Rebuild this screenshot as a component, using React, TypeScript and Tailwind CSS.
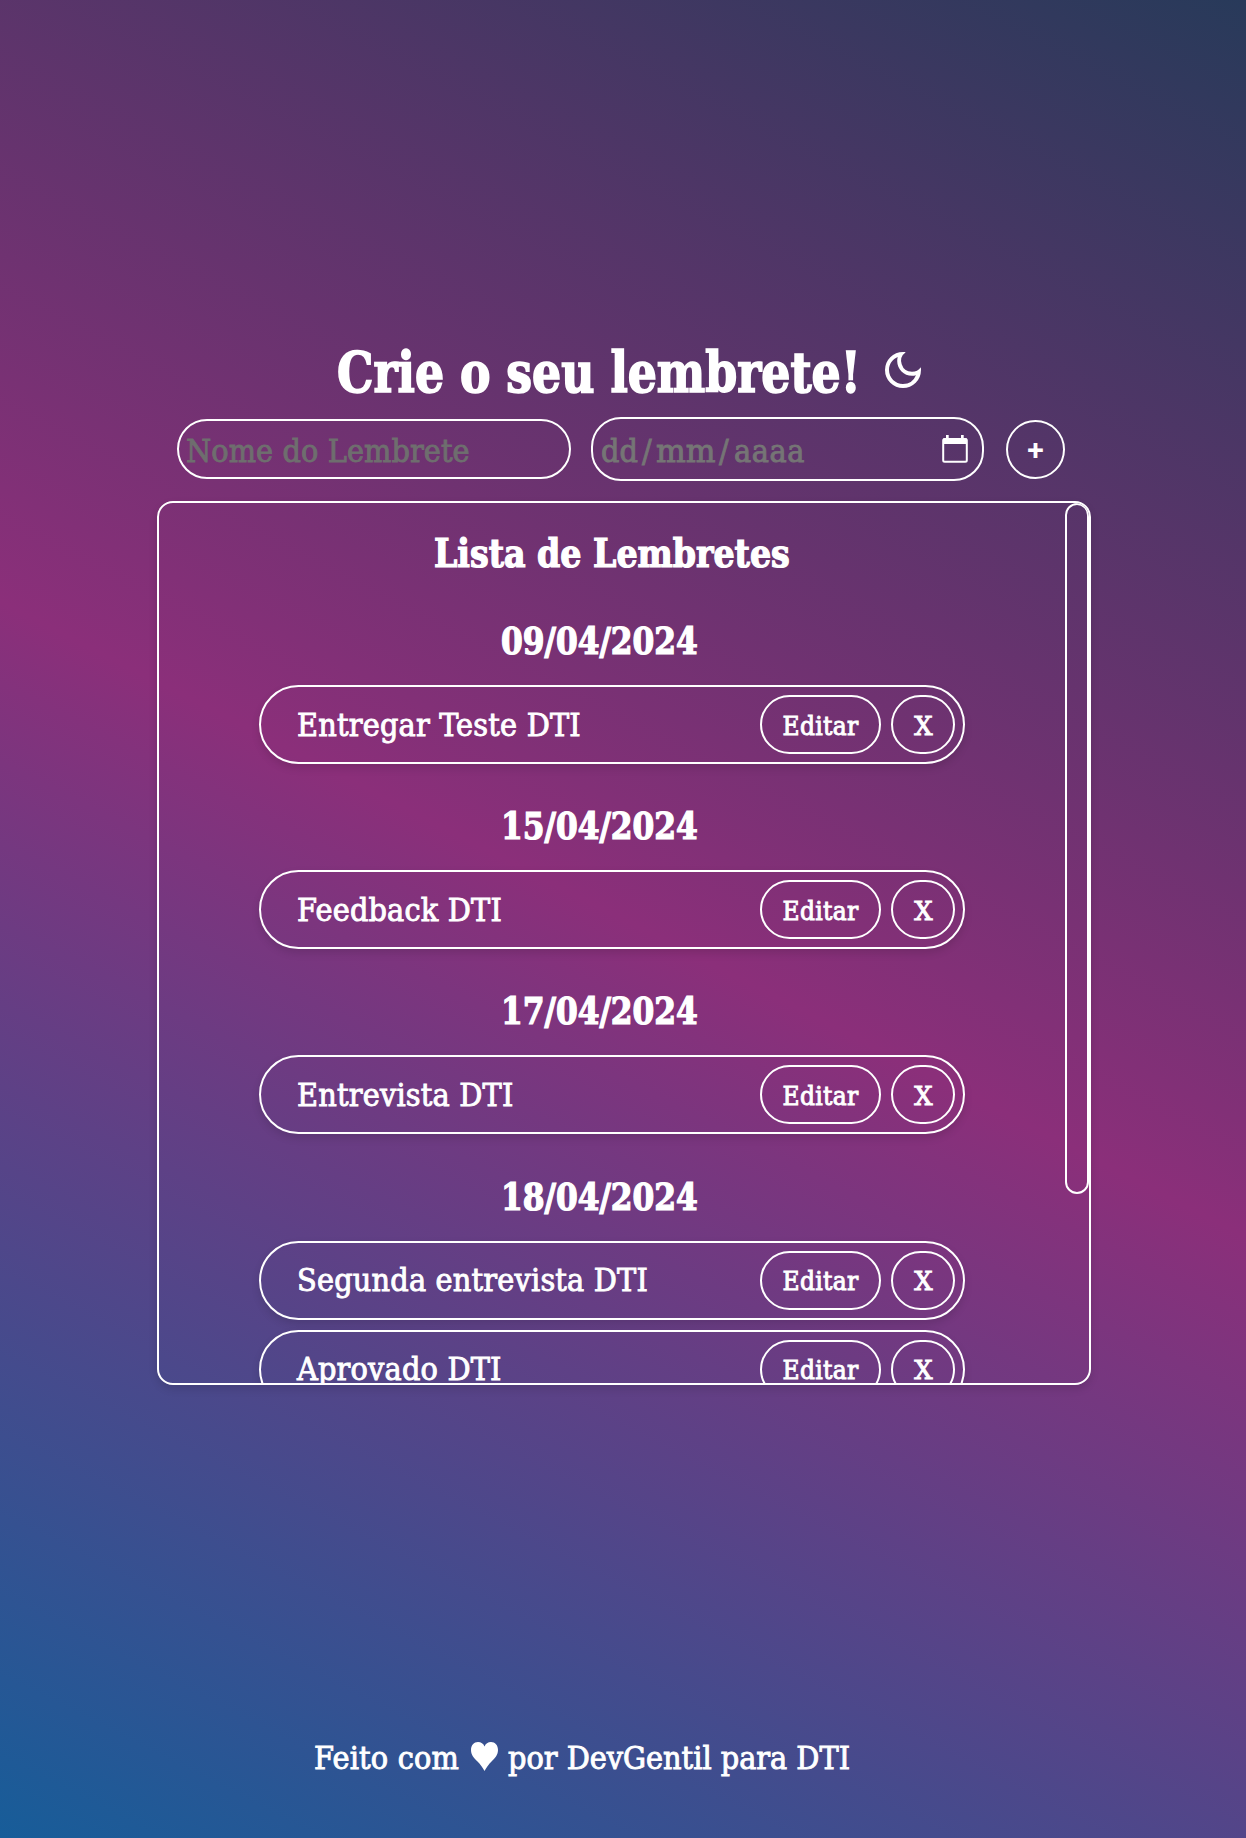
import { MdOutlineDarkMode } from "react-icons/md";

type Group = { date: string; items: string[] };

const groups: Group[] = [
  { date: "09/04/2024", items: ["Entregar Teste DTI"] },
  { date: "15/04/2024", items: ["Feedback DTI"] },
  { date: "17/04/2024", items: ["Entrevista DTI"] },
  { date: "18/04/2024", items: ["Segunda entrevista DTI", "Aprovado DTI"] },
];

function CalendarIcon() {
  return (
    <svg className="-mt-px" width="26" height="28" viewBox="0 0 26 28" fill="none">
      <rect x="1.2" y="4" width="23.6" height="22.8" rx="1.5" stroke="white" strokeWidth="2" />
      <path d="M1 3.500h24v5.500H1zM4 0h2.700v4H4zM19 0h2.700v4h-2.700z" fill="white" />
    </svg>
  );
}

function HeartIcon() {
  return (
    <svg className="-mt-1" width="27" height="29" viewBox="0 0 27 29" fill="white">
      <path d="M13.5 29C12 26 9.500 22.500 6 19C2.500 15.500 0 12.500 0 8C0 3 3 0 7 0C10 0 12.500 1.500 13.500 4.500C14.500 1.500 17 0 20 0C24 0 27 3 27 8C27 12.500 24.500 15.500 21 19C17.500 22.500 15 26 13.500 29Z" />
    </svg>
  );
}

function Item({ name }: { name: string }) {
  return (
    <li className="flex h-[79px] w-[706px] items-center gap-[10px] rounded-full border-2 border-white pr-2 pl-9 text-[32px] shadow-[0_4px_8px_rgba(0,0,0,0.12)]">
      <span className="flex-1 tracking-[0.2px]">{name}</span>
      <button className="h-[59px] w-[121px] rounded-[30px] border-2 border-white pt-0.5 text-[26px] tracking-[0.3px]">
        Editar
      </button>
      <button className="h-[59px] w-16 rounded-[30px] border-2 border-white pt-0.5 text-[26px]">
        <span className="inline-block scale-x-[1.1]">X</span>
      </button>
    </li>
  );
}

export default function App() {
  return (
    <div className="flex h-[1838px] w-[1246px] flex-col bg-[linear-gradient(27deg,#175d99_0%,#8b2f7a_50%,#283a5a_100%)] font-['DejaVu_Serif_Condensed','DejaVu_Serif',serif] leading-none whitespace-nowrap text-white [-webkit-text-stroke:0.9px_currentColor]">
      <header className="mt-[342px] flex h-14 items-center pl-[337px]">
        <h1 className="mt-[3px] w-[542px] origin-left scale-x-[0.908] text-[56px] leading-[56px] font-bold [-webkit-text-stroke:1.6px_currentColor]">
          Crie o seu lembrete!
        </h1>
        <MdOutlineDarkMode className="size-12 [-webkit-text-stroke:0]" />
      </header>

      <form className="mt-[19px] flex h-16 items-center pl-[177px] text-[32px]">
        <div className="flex h-[60px] w-[394px] items-center rounded-full border-2 border-white pt-[3px] pl-[7px] tracking-[0.1px] text-[#6e6e6e]">
          Nome do Lembrete
        </div>
        <div className="ml-5 flex h-16 w-[393px] items-center justify-between rounded-[30px] border-2 border-white pr-3.5 pl-2">
          <div className="flex pt-[3px] text-[#757575]">
            <span className="w-[41px]">dd</span>
            <span className="w-[14px]">/</span>
            <span className="w-[63px] origin-left scale-x-[1.09]">mm</span>
            <span className="w-[15px]">/</span>
            <span className="tracking-[0.6px]">aaaa</span>
          </div>
          <CalendarIcon />
        </div>
        <button
          type="button"
          className="mt-px ml-[22px] size-[59px] rounded-full border-2 border-white pt-px font-['Roboto'] text-[30px] font-semibold [-webkit-text-stroke:0]"
        >
          +
        </button>
      </form>

      <main className="mt-5 ml-[157px] flex h-[884px] w-[934px] overflow-hidden rounded-2xl border-2 border-white shadow-[0_4px_8px_rgba(0,0,0,0.12)]">
        <section className="flex flex-1 flex-col items-center pt-[30px]">
          <h2 className="shrink-0 scale-x-[0.947] text-[39px] leading-10 font-bold [-webkit-text-stroke:1.2px_currentColor]">
            Lista de Lembretes
          </h2>
          {groups.map((group) => (
            <div key={group.date} className="mb-[43.2px] flex shrink-0 flex-col items-center first-of-type:mt-[49px]">
              <h3 className="mr-[25px] mb-[23px] scale-x-[0.952] text-[36.500px] leading-10 font-bold [-webkit-text-stroke:1.2px_currentColor]">
                {group.date}
              </h3>
              <ul className="flex flex-col gap-[10px]">
                {group.items.map((name) => (
                  <Item key={name} name={name} />
                ))}
              </ul>
            </div>
          ))}
        </section>
        <div className="h-[691px] w-6 shrink-0 rounded-xl border-2 border-white" />
      </main>

      <footer className="mt-[353px] flex h-10 items-center pl-[314px] text-[32px]">
        <span className="w-[157px] tracking-[0.2px]">Feito com</span>
        <HeartIcon />
        <span className="ml-[10px]">por DevGentil para DTI</span>
      </footer>
    </div>
  );
}
